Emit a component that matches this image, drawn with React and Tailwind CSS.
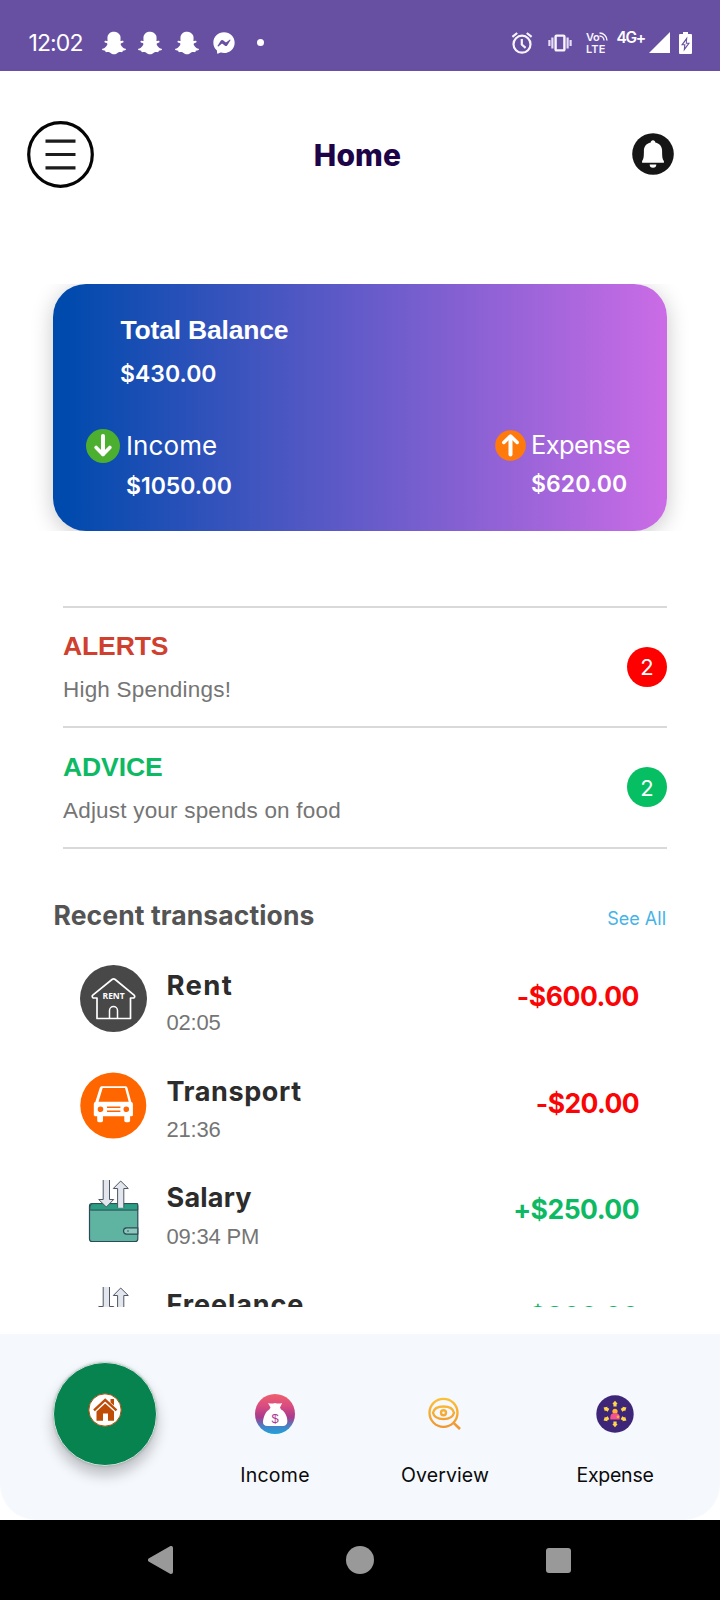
import React from "react";
import { FaSnapchatGhost, FaFacebookMessenger } from "react-icons/fa";

const SANS = "font-['Inter','Noto_Sans',sans-serif]";
const ARIAL = "font-['Liberation_Sans',Arial,sans-serif]";

function AlarmIcon() {
  return (
    <svg width="22" height="22" viewBox="0 0 22 22" fill="none" stroke="#f8f4ff" strokeWidth="2.2">
      <circle cx="11" cy="12.2" r="8.5" />
      <path d="M10.8 7v5.6l3.8 3.2M1.4 4.9 6.200 1M20.600 4.900 15.800 1" />
    </svg>
  );
}

function VibrateIcon() {
  return (
    <svg width="24" height="18" viewBox="0 0 24 18" fill="none" stroke="#e6dcf7" strokeWidth="2.2">
      <rect x="7.6" y="1.6" width="8.8" height="14.8" rx="1" stroke="#f8f4ff" strokeWidth="2.4" />
      <path d="M4.400 3.500v11M1.400 6v6M19.600 3.500v11M22.600 6v6" />
    </svg>
  );
}

function StatusBar() {
  return (
    <div className={`flex h-[71px] items-center bg-[#6750a1] pt-[14px] text-white ${SANS}`}>
      <div className="ml-[28.5px] w-[54px] pt-px text-[23px] leading-7 tracking-[-0.88px]">12:02</div>
      <div className="ml-[19px] flex items-center gap-[12.5px]">
        <FaSnapchatGhost size={24} />
        <FaSnapchatGhost size={24} />
        <FaSnapchatGhost size={24} />
        <FaFacebookMessenger size={22} className="ml-[1.5px]" />
      </div>
      <div className="ml-[22px] size-[7px] rounded-full bg-white" />
      <div className="ml-auto mr-[28.5px] flex items-center">
        <AlarmIcon />
        <div className="ml-[15px]"><VibrateIcon /></div>
        <div className="ml-[14px] flex w-[23px] flex-col text-[11px] font-semibold leading-[12px] text-[#f8f4ff]">
          <div className="flex h-3 items-center">
            <span className="leading-[12px] tracking-[-0.3px]">Vo</span>
            <svg width="9" height="9" viewBox="0 0 9 9" fill="none" stroke="#f8f4ff" strokeWidth="1.4">
              <path d="M0.5 1A7.5 7.5 0 0 1 8 8.5M0.5 4A4.5 4.5 0 0 1 5 8.5" />
            </svg>
          </div>
          <span className="tracking-[0.1px]">LTE</span>
        </div>
        <div className="mb-[10px] ml-[7.5px] w-[31px] text-[15.5px] font-semibold leading-4 tracking-[-1.3px]">4G+</div>
        <svg width="21" height="21" viewBox="0 0 21 21" className="ml-px"><path d="M21 0v21H0z" fill="#fff" /></svg>
        <svg width="13" height="22" viewBox="0 0 13 22" className="ml-[9px]">
          <path d="M4 0h5v2h3q1 0 1 1v18q0 1-1 1H1q-1 0-1-1V3q0-1 1-1h3z" fill="#fff" />
          <path d="M8.4 4.5 2 13.2h3.2L4.600 19.500 11 10.800H7.800z" fill="#6750a1" />
          <path d="M7.200 8.500 4.200 12.300h2.300l-.5 3.200 2.900-3.800H6.700z" fill="#fff" />
        </svg>
      </div>
    </div>
  );
}

function Header() {
  return (
    <header className="flex h-[166px] items-center pl-[26.5px] pr-[46.5px]">
      <svg width="67" height="67" viewBox="0 0 67 67" fill="none">
        <circle cx="33.5" cy="33.5" r="31.8" stroke="#050505" strokeWidth="3.2" />
        <path d="M18.5 20.200h30M18.500 33.500h30M18.500 46.800h30" stroke="#1c1c1c" strokeWidth="3.2" />
      </svg>
      <h1 className={`flex-1 pr-[10px] pt-[2px] text-center text-[30px] font-extrabold leading-9 tracking-[0.1px] text-[#1d0347] ${SANS}`}>
        Home
      </h1>
      <svg width="42" height="42" viewBox="0 0 42 42">
        <circle cx="21" cy="21" r="20.8" fill="#161616" />
        <path d="M21 7.200c1.400 0 2.200 1 2.300 2.200 4.700 1.100 6.800 4.300 6.800 8.300 0 6 .3 8.400 1.800 10.200v1.900H10.100v-1.900c1.500-1.800 1.800-4.200 1.800-10.200 0-4 2.100-7.200 6.800-8.300C18.800 8.200 19.600 7.200 21 7.200z" fill="#fff" />
        <path d="M17.700 31.500h6.600a3.300 3.300 0 0 1-6.600 0z" fill="#fff" />
      </svg>
    </header>
  );
}

function BalanceCard() {
  return (
    <section className="mx-[21px] mt-[47px] h-[247px] overflow-hidden px-8">
      <div className={`h-[247px] rounded-[33px] bg-linear-to-r/srgb from-[#004aad] from-2% to-[#cb6ce6] pt-[30px] text-white shadow-[0_4px_22px_rgba(0,0,0,0.22)] ${SANS}`}>
        <div className={`pl-[67.5px] text-[26.5px] font-bold leading-8 tracking-[-0.2px] ${ARIAL}`}>Total Balance</div>
        <div className="mt-[14px] pl-[67px] text-[23px] font-semibold leading-7">$430.00</div>
        <div className="mt-[40.6px] flex items-start justify-between pl-[33px] pr-[36px]">
          <div className="flex items-start gap-[6px]">
            <svg width="34" height="34" viewBox="0 0 34 34" fill="none">
              <circle cx="17" cy="17" r="17" fill="#4caf2f" />
              <path d="M17 7v18" stroke="#fff" strokeWidth="4" strokeLinecap="round" />
              <path d="m10.100 18.500 6.900 7 6.900-7" stroke="#fff" strokeWidth="3.600" strokeLinecap="round" strokeLinejoin="round" />
            </svg>
            <div className="pt-[1.5px]">
              <div className="text-[26px] leading-8 tracking-[0.1px]">Income</div>
              <div className="mt-[10px] text-[23px] font-semibold leading-7">$1050.00</div>
            </div>
          </div>
          <div className="flex w-[136px] items-start gap-[5px]">
            <svg width="31" height="31" viewBox="0 0 31 31" fill="none" className="mt-px shrink-0">
              <circle cx="15.5" cy="15.5" r="15.3" fill="#ff7a0a" />
              <path d="M15.500 24.500V7" stroke="#fff" strokeWidth="4" strokeLinecap="round" />
              <path d="m8.800 12.500 6.700-6.500 6.700 6.500" stroke="#fff" strokeWidth="3.500" strokeLinecap="round" strokeLinejoin="round" />
            </svg>
            <div className="pt-[0.7px]">
              <div className="text-[25.5px] leading-8 tracking-[-0.6px]">Expense</div>
              <div className="mt-[9px] text-[23px] font-semibold leading-7 tracking-[0.1px]">$620.00</div>
            </div>
          </div>
        </div>
      </div>
    </section>
  );
}

function Notice({ title, text, count, titleColor, badgeColor }) {
  return (
    <div className="flex h-[120.5px] justify-between border-t-2 border-[#d9d9d9]">
      <div className={`pt-[22.7px] ${ARIAL}`}>
        <div className={`text-[26.5px] font-bold leading-8 tracking-[-0.1px] ${titleColor}`}>{title}</div>
        <div className="mt-[14px] text-[22.5px] leading-7 tracking-[0.2px] text-[#757575]">{text}</div>
      </div>
      <div className={`flex size-10 items-center justify-center self-center rounded-full pt-px text-[22px] leading-none text-white ${badgeColor} ${SANS}`}>
        {count}
      </div>
    </div>
  );
}

function RentIcon() {
  return (
    <svg width="67" height="67" viewBox="0 0 67 67" fill="none">
      <circle cx="33.5" cy="33.5" r="33.5" fill="#484848" />
      <path
        d="M17 33v20.500h33.500V33h3.200c1.200-.6 1.300-1.900.4-2.800L35.200 14.500c-1-.8-2.200-.8-3.200 0L12.800 30.200c-.9.9-.7 2.200.4 2.800z"
        stroke="#fff" strokeWidth="1.7" strokeLinejoin="round"
      />
      <path d="M29.500 53.500v-8a4 4 0 0 1 8 0v8" stroke="#fff" strokeWidth="1.5" />
      <text x="33.6" y="34" textAnchor="middle" fill="#fff" fontSize="8.5" fontWeight="700" fontFamily="Open Sans, sans-serif" textLength="22">RENT</text>
    </svg>
  );
}

function CarIcon() {
  return (
    <svg width="67" height="67" viewBox="0 0 67 67">
      <circle cx="33.3" cy="33.4" r="33" fill="#ff6600" />
      <path
        fillRule="evenodd"
        d="M22 14.200h23.200c1.300 0 2 .6 2.300 1.800l3.800 14c1 .4 1.600 1 1.600 2.200V43c0 .8-.4 1.200-1.200 1.200h-1.600v4.600c0 2-5.800 2-5.800 0v-4.600H23v4.600c0 2-5.800 2-5.800 0v-4.600h-2.200c-.8 0-1.200-.4-1.200-1.200V32.200c0-1.200.5-1.800 1.500-2.200l4.400-14c.4-1.200 1.100-1.800 2.300-1.800zm.7 1.800L18.500 29.700h30.200L45 16zM20.500 34.500a2.800 2.800 0 1 0 0 5.600 2.800 2.800 0 0 0 0-5.600zm25.800 0a2.800 2.800 0 1 0 0 5.600 2.800 2.800 0 0 0 0-5.600zM27 34.600v1.500h13.400v-1.500zm0 4v1.500h13.400v-1.500z"
        fill="#fff"
      />
    </svg>
  );
}

function WalletIcon() {
  return (
    <svg width="67" height="67" viewBox="0 0 67 67" strokeLinejoin="round">
      <rect x="9.5" y="25.5" width="48.3" height="38" rx="2.5" fill="#5fb3a1" stroke="#2f4a57" strokeWidth="1.2" />
      <path d="M9.700 31c0-3.500 1.300-5.400 3.300-5.400h44.700v6.500H12c-1.300 0-2.300 0-2.300-1.100z" fill="#2a9d83" stroke="#2f4a57" strokeWidth="1" />
      <path d="M57.800 49.800H46.500q-3 .3-3 3.100t3 3.200h11.300z" fill="#8cc9bc" stroke="#2f4a57" strokeWidth="1.2" />
      <circle cx="48" cy="53" r=".8" fill="#2f4a57" />
      <path d="M23.200 2h6.300v19.500h4.200L26.300 29l-7.600-7.500h4.500z" fill="#e3e6ec" />
      <path d="M23.200 2v19.500h-4.500l7.600 7.500 7.400-7.500h-4.200V2" fill="none" stroke="#4c5665" strokeWidth="1" />
      <path d="M37.600 29.800V10.500h-4.300L40.700 3l7.600 7.500h-4.500v19.300z" fill="#e3e6ec" />
      <path d="M37.600 29.800V10.500h-4.300L40.700 3l7.600 7.500h-4.500v19.300" fill="none" stroke="#4c5665" strokeWidth="1" />
    </svg>
  );
}

const transactions = [
  { icon: RentIcon, name: "Rent", time: "02:05", amount: "-$600.00", color: "text-[#f90505]", size: "text-[27.5px]", nameTracking: "tracking-[1.3px]", tracking: "tracking-[-0.45px]" },
  { icon: CarIcon, name: "Transport", time: "21:36", amount: "-$20.00", color: "text-[#f90505]", size: "text-[27px]", nameTracking: "tracking-[0.6px]", tracking: "tracking-[-0.6px]" },
  { icon: WalletIcon, name: "Salary", time: "09:34 PM", amount: "+$250.00", color: "text-[#0dba63]", size: "text-[27px]", nameTracking: "tracking-[0.2px]", tracking: "tracking-[-0.5px]" },
  { icon: WalletIcon, name: "Freelance", time: "10:15 PM", amount: "+$800.00", color: "text-[#0dba63]", size: "text-[27px]", nameTracking: "tracking-[0.9px]", tracking: "tracking-[-0.5px]" },
];

function Transactions() {
  return (
    <section className={SANS}>
      <div className="mt-[50px] flex items-baseline justify-between pl-[53.5px] pr-[54px]">
        <h2 className="text-[26.5px] font-bold leading-8 tracking-[0.1px] text-[#545454]">Recent transactions</h2>
        <a className="text-[18px] leading-6 text-[#45b3e8]">See All</a>
      </div>
      <div className="mt-[34.5px] h-[342px] overflow-hidden">
        {transactions.map(({ icon: Icon, name, time, amount, color, size, nameTracking, tracking }) => (
          <div key={name} className="flex h-[106.7px] items-start pl-20 pr-[81px]">
            <Icon />
            <div className="ml-[19.5px] pt-[4px]">
              <div className={`font-bold leading-8 text-[#2c2c2c] ${size} ${nameTracking}`}>{name}</div>
              <div className={`mt-[8.2px] text-[22px] leading-7 tracking-[-0.2px] text-[#757575] ${ARIAL}`}>{time}</div>
            </div>
            <div className={`ml-auto mt-[15px] text-[26.5px] font-bold leading-8 ${color} ${tracking}`}>{amount}</div>
          </div>
        ))}
      </div>
    </section>
  );
}

function MoneyBagIcon() {
  return (
    <svg width="40" height="40" viewBox="0 0 40 40">
      <defs>
        <linearGradient id="bag" x1="0" y1="0" x2="0" y2="1">
          <stop offset="0" stopColor="#f0606c" />
          <stop offset=".3" stopColor="#d94c80" />
          <stop offset=".58" stopColor="#a93a8c" />
          <stop offset=".82" stopColor="#4385c6" />
          <stop offset="1" stopColor="#1fa3dc" />
        </linearGradient>
      </defs>
      <circle cx="20" cy="20" r="20" fill="url(#bag)" />
      <path d="M13 9q3.500 1 7 0 3.500 1 7.200 0L25 13.500l1 2c4 1.500 6.800 8 6.300 12.500-.3 2.800-2 4-4.300 4H12.500c-3 0-4.800-1.600-4.500-4.500.5-4.500 2.500-10 6.300-12l1.200-2z" fill="#fff" />
      <text x="20.2" y="28.5" textAnchor="middle" fontSize="13" fontFamily="Liberation Sans, sans-serif" fill="#a83c90">$</text>
    </svg>
  );
}

function OverviewIcon() {
  return (
    <svg width="34" height="34" viewBox="0 0 34 34" fill="none" stroke="url(#lens)" strokeWidth="2.3">
      <defs>
        <linearGradient id="lens" x1="0" y1="0" x2="0" y2="34" gradientUnits="userSpaceOnUse">
          <stop offset="0" stopColor="#fbc338" />
          <stop offset="1" stopColor="#f0912f" />
        </linearGradient>
      </defs>
      <circle cx="15.5" cy="15.8" r="14" />
      <path d="M5 15.800c1-4.500 5-6.300 10.500-6.300S25 11.300 26 15.800c-1 4.500-5 6.300-10.500 6.300S6 20.300 5 15.800z" />
      <circle cx="15.5" cy="15.8" r="2.5" strokeWidth="2.4" />
      <path d="m25.300 25.600 6.700 6.400" strokeWidth="2.6" />
    </svg>
  );
}

function ExpenseIcon() {
  return (
    <svg width="38" height="38" viewBox="0 0 38 38">
      <circle cx="19" cy="19" r="18.7" fill="#3d2677" />
      {[0, 60, 120, 180, 240, 300].map((a) => (
        <path key={a} d="M19 5.800l2.600 3-1 .4v2.300h-3.200V9.200l-1-.4z" fill="#ffd54a" transform={`rotate(${a} 19 19)`} />
      ))}
      <circle cx="19" cy="16.3" r="2.6" fill="#ffb52e" />
      <path d="M14.300 24.600v-2.600c0-2.500 1.800-4 4.700-4s4.700 1.500 4.700 4v2.600z" fill="#f2528f" />
      <circle cx="22" cy="21.8" r="1.4" fill="#ffb52e" />
    </svg>
  );
}

function HomeIcon() {
  return (
    <svg width="34" height="34" viewBox="0 0 34 34">
      <circle cx="17" cy="17" r="16.2" fill="#fff" stroke="#b5500c" strokeWidth="1" />
      <path d="M22.500 6h3.500v6.500l-3.500-3z" fill="#bf4d06" />
      <path d="m6 17.300 11.200-10.500L28.500 17.300" fill="none" stroke="#bf4d06" strokeWidth="2.4" />
      <path d="M17.200 10.500 26 18.500v9.300h-6v-7.300h-5v7.300H8.500v-9.300z" fill="#bf4d06" />
    </svg>
  );
}

function NavItem({ icon, label, tracking }) {
  return (
    <div className="flex flex-col items-center pt-[59.5px]">
      <div className="flex h-10 items-center justify-center">{icon}</div>
      <div className={`mt-[29.5px] text-[19.5px] leading-6 text-[#0b0b0b] ${tracking}`}>{label}</div>
    </div>
  );
}

function BottomNav() {
  return (
    <nav className={`mt-[27px] grid min-h-0 flex-1 grid-cols-4 rounded-b-[36px] bg-[#f5f8fd] px-5 ${SANS}`}>
      <div className="flex justify-center pr-px pt-[27.5px]">
        <div className="flex size-[104px] items-center justify-center rounded-full border border-[#d3e2dc] bg-[#06834f] pb-[7px] shadow-[0_9px_14px_rgba(0,0,0,0.24),0_0_3px_rgba(0,0,0,0.2)]">
          <HomeIcon />
        </div>
      </div>
      <NavItem icon={<MoneyBagIcon />} label="Income" tracking="tracking-[0.27px]" />
      <NavItem icon={<OverviewIcon />} label="Overview" tracking="tracking-[0.11px]" />
      <NavItem icon={<ExpenseIcon />} label="Expense" tracking="tracking-[-0.25px]" />
    </nav>
  );
}

function SystemBar() {
  return (
    <div className="flex h-20 shrink-0 items-center bg-black pl-[148px] pr-[149px]">
      <svg width="25" height="28" viewBox="0 0 25 28">
        <path d="M23 2v24L2 14z" fill="#999" stroke="#999" strokeWidth="4" strokeLinejoin="round" />
      </svg>
      <div className="ml-[173px] size-7 rounded-full bg-[#999]" />
      <div className="ml-auto size-[25px] rounded-[3px] bg-[#999]" />
    </div>
  );
}

export default function App() {
  return (
    <div className="flex h-[1600px] w-[720px] flex-col overflow-hidden bg-white">
      <StatusBar />
      <Header />
      <BalanceCard />
      <section className="ml-[63px] mr-[53px] mt-[74.5px] border-b-2 border-[#d9d9d9]">
        <Notice title="ALERTS" text="High Spendings!" count={2} titleColor="text-[#d0402f]" badgeColor="bg-[#ff0000]" />
        <Notice title="ADVICE" text="Adjust your spends on food" count={2} titleColor="text-[#0dba63]" badgeColor="bg-[#06bf63]" />
      </section>
      <Transactions />
      <BottomNav />
      <SystemBar />
    </div>
  );
}
